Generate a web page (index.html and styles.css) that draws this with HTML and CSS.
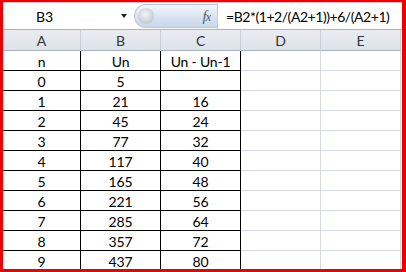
FILE: index.html
```html
<!DOCTYPE html>
<html>
<head>
<meta charset="utf-8">
<link rel="stylesheet" href="styles.css">
</head>
<body>
<div class="frame">
  <div class="fbar">
    <div class="namebox">
      <span class="name">B3</span>
      <span class="caret"></span>
    </div>
    <div class="pill">
      <span class="knob"></span>
      <span class="fx">f<span class="fx-x">x</span></span>
    </div>
    <div class="formula">=B2*(1+2/(A2+1))+6/(A2+1)</div>
  </div>
  <div class="sheet">
    <div class="hd">A</div><div class="hd">B</div><div class="hd">C</div><div class="hd">D</div><div class="hd">E</div>
    <div class="c">n</div><div class="c">Un</div><div class="c">Un - Un-1</div><div class="c g"></div><div class="c g"></div>
    <div class="c">0</div><div class="c">5</div><div class="c"></div><div class="c g"></div><div class="c g"></div>
    <div class="c">1</div><div class="c">21</div><div class="c">16</div><div class="c g"></div><div class="c g"></div>
    <div class="c">2</div><div class="c">45</div><div class="c">24</div><div class="c g"></div><div class="c g"></div>
    <div class="c">3</div><div class="c">77</div><div class="c">32</div><div class="c g"></div><div class="c g"></div>
    <div class="c">4</div><div class="c">117</div><div class="c">40</div><div class="c g"></div><div class="c g"></div>
    <div class="c">5</div><div class="c">165</div><div class="c">48</div><div class="c g"></div><div class="c g"></div>
    <div class="c">6</div><div class="c">221</div><div class="c">56</div><div class="c g"></div><div class="c g"></div>
    <div class="c">7</div><div class="c">285</div><div class="c">64</div><div class="c g"></div><div class="c g"></div>
    <div class="c">8</div><div class="c">357</div><div class="c">72</div><div class="c g"></div><div class="c g"></div>
    <div class="c">9</div><div class="c">437</div><div class="c">80</div><div class="c g"></div><div class="c g"></div>
  </div>
</div>
</body>
</html>
```
FILE: styles.css
```css
html, body {
  margin: 0;
  padding: 0;
  background: #ffffff;
}
.frame {
  box-sizing: border-box;
  width: 406px;
  height: 272px;
  border-style: solid;
  border-color: #ee0000;
  border-width: 2px 4px 3px 3px;
  overflow: hidden;
  font-family: Lato, "Open Sans", sans-serif;
  font-size: 14px;
  color: #000;
}
.fbar {
  height: 28px;
  box-sizing: border-box;
  border-top: 1px solid #c9ced6;
  border-bottom: 1px solid #a9b3bf;
  display: grid;
  grid-template-columns: 131px 83px 1fr;
  align-items: center;
  background: #fff;
}
.namebox {
  height: 100%;
  display: flex;
  align-items: center;
  position: relative;
}
.name {
  margin-left: 33px;
}
.caret {
  position: absolute;
  left: 118px;
  top: 11px;
  width: 0;
  height: 0;
  border-left: 3.5px solid transparent;
  border-right: 3.5px solid transparent;
  border-top: 4px solid #222;
}
.pill {
  height: 24px;
  box-sizing: border-box;
  border-radius: 12px 0 0 12px;
  border: 1px solid #b8c6d9;
  border-right: none;
  background: linear-gradient(#f3f6fb, #dbe5f2 50%, #c8d7ea);
  position: relative;
  display: flex;
  align-items: center;
  justify-content: flex-end;
}
.knob {
  position: absolute;
  left: 3px;
  top: 3px;
  width: 16px;
  height: 16px;
  border-radius: 50%;
  background: radial-gradient(circle at 45% 40%, #f4f5f7 0, #d6dbe2 45%, #aeb7c3 100%);
}
.fx {
  font-family: "Liberation Serif", serif;
  font-style: italic;
  font-size: 15px;
  color: #555c66;
  margin-right: 7px;
  letter-spacing: -1px;
}
.fx-x {
  font-size: 12px;
}
.formula {
  min-width: 0;
  height: 100%;
  border-left: 1px solid #c2cbd6;
  display: flex;
  align-items: center;
  padding-left: 8px;
  white-space: nowrap;
  overflow: hidden;
  letter-spacing: -0.45px;
}
.sheet {
  display: grid;
  grid-template-columns: 78px 80px 80px 80px 80px;
  grid-template-rows: 21px repeat(11, 20px);
  letter-spacing: -0.2px;
}
.hd {
  background: linear-gradient(#e9edf2, #dde3ea);
  border-right: 1px solid #c8ced6;
  border-bottom: 1px solid #a9b3bf;
  display: flex;
  align-items: center;
  justify-content: center;
  color: #333;
}
.c {
  display: flex;
  align-items: center;
  justify-content: center;
  padding-top: 2px;
  border-right: 1px solid #000;
  border-bottom: 1px solid #000;
}
.c.g {
  border-right-color: #d6dae0;
  border-bottom-color: #d6dae0;
}
```
